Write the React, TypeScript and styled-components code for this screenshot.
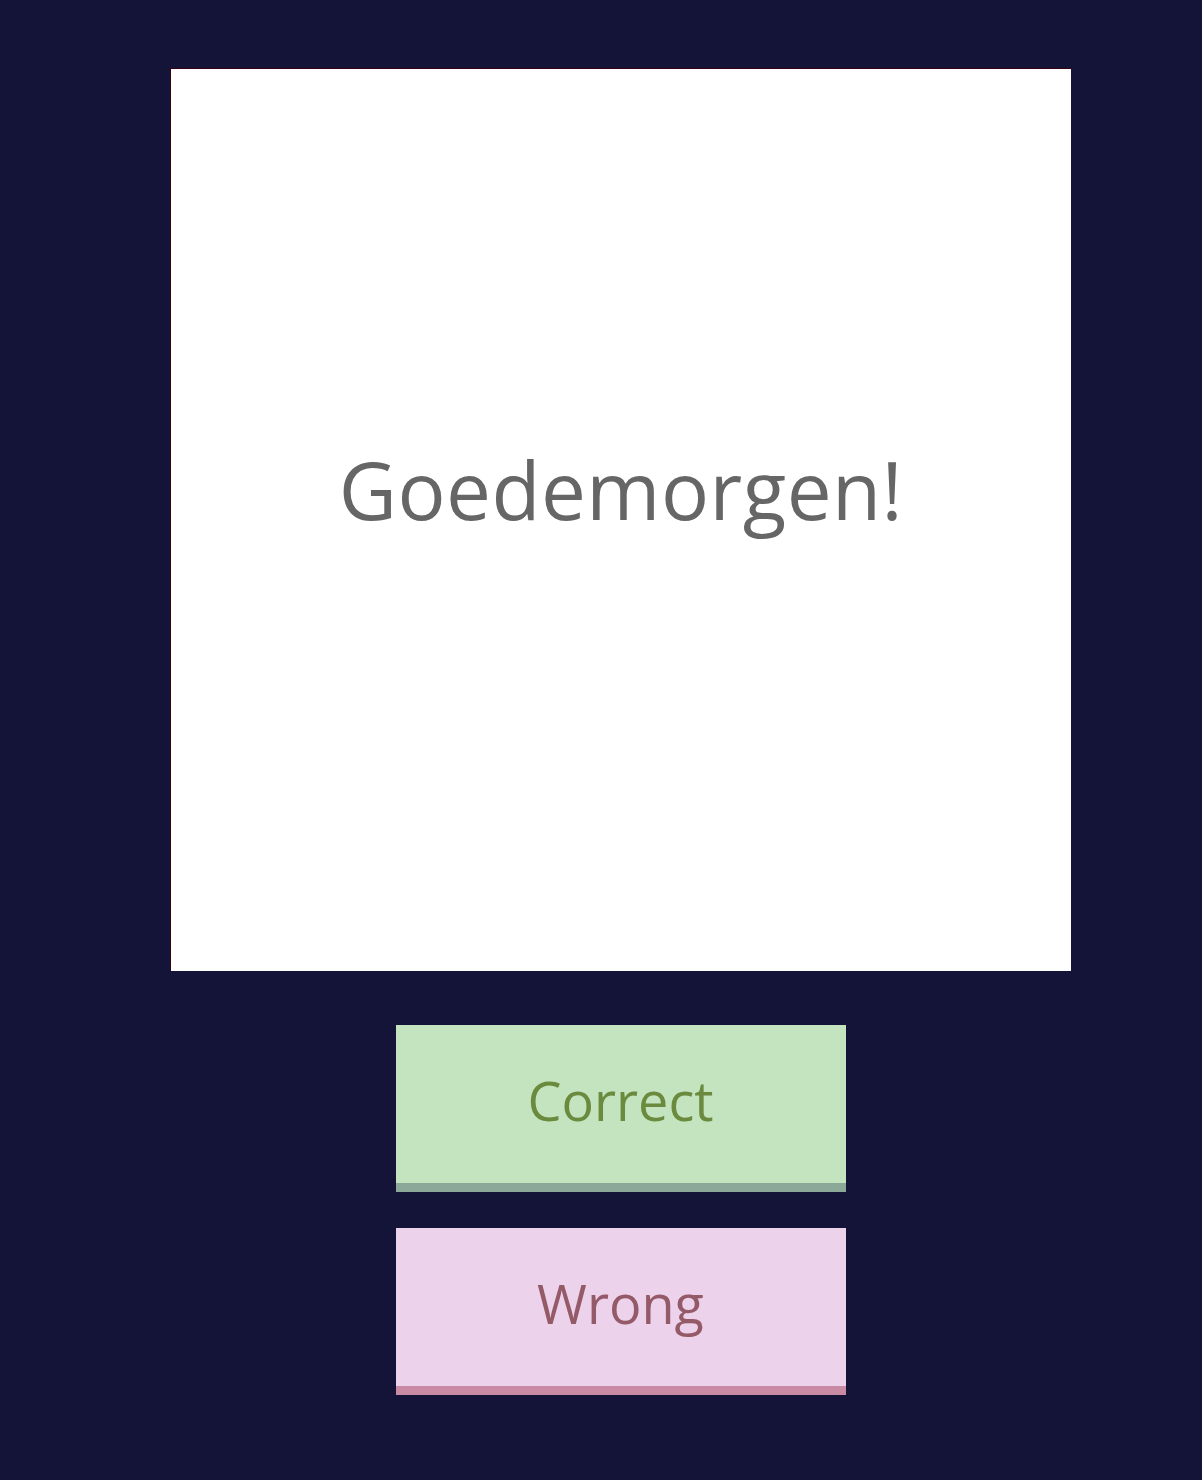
import React from "react";
import styled, { createGlobalStyle } from "styled-components";

const Global = createGlobalStyle`
  html, body {
    margin: 0;
    padding: 0;
    background: #141439;
    font-family: "Open Sans", "Noto Sans", sans-serif;
  }
`;

const Page = styled.main`
  min-height: 1480px;
  box-sizing: border-box;
  display: flex;
  flex-direction: column;
  align-items: center;
  padding: 68px 0 0 39px;
`;

const Card = styled.div`
  width: 901px;
  height: 903px;
  box-sizing: border-box;
  background: #ffffff;
  border-top: 1px solid #3a0010;
  border-left: 1px solid #3a0010;
  display: flex;
  align-items: center;
  justify-content: center;
  padding-bottom: 64px;
`;

const Word = styled.h1`
  margin: 0;
  font-weight: 400;
  font-size: 80px;
  color: #666666;
  letter-spacing: 0.5px;
`;

const Buttons = styled.div`
  display: flex;
  flex-direction: column;
  gap: 36px;
  margin-top: 54px;
`;

const Answer = styled.button<{ $bg: string; $fg: string; $edge: string }>`
  width: 450px;
  height: 167px;
  border: none;
  border-bottom: 9px solid ${(p) => p.$edge};
  background: ${(p) => p.$bg};
  color: ${(p) => p.$fg};
  font-family: "Open Sans", "Noto Sans", sans-serif;
  font-size: 54px;
  font-weight: 400;
  padding: 0 0 8px;
  cursor: pointer;
  box-sizing: border-box;
`;

export default function App() {
  return (
    <>
      <Global />
      <Page>
        <Card>
          <Word>Goedemorgen!</Word>
        </Card>
        <Buttons>
          <Answer $bg="#c4e4c0" $fg="#6a8a3e" $edge="#8ca898">
            Correct
          </Answer>
          <Answer $bg="#ecd2ea" $fg="#955a68" $edge="#c98aa4">
            Wrong
          </Answer>
        </Buttons>
      </Page>
    </>
  );
}
